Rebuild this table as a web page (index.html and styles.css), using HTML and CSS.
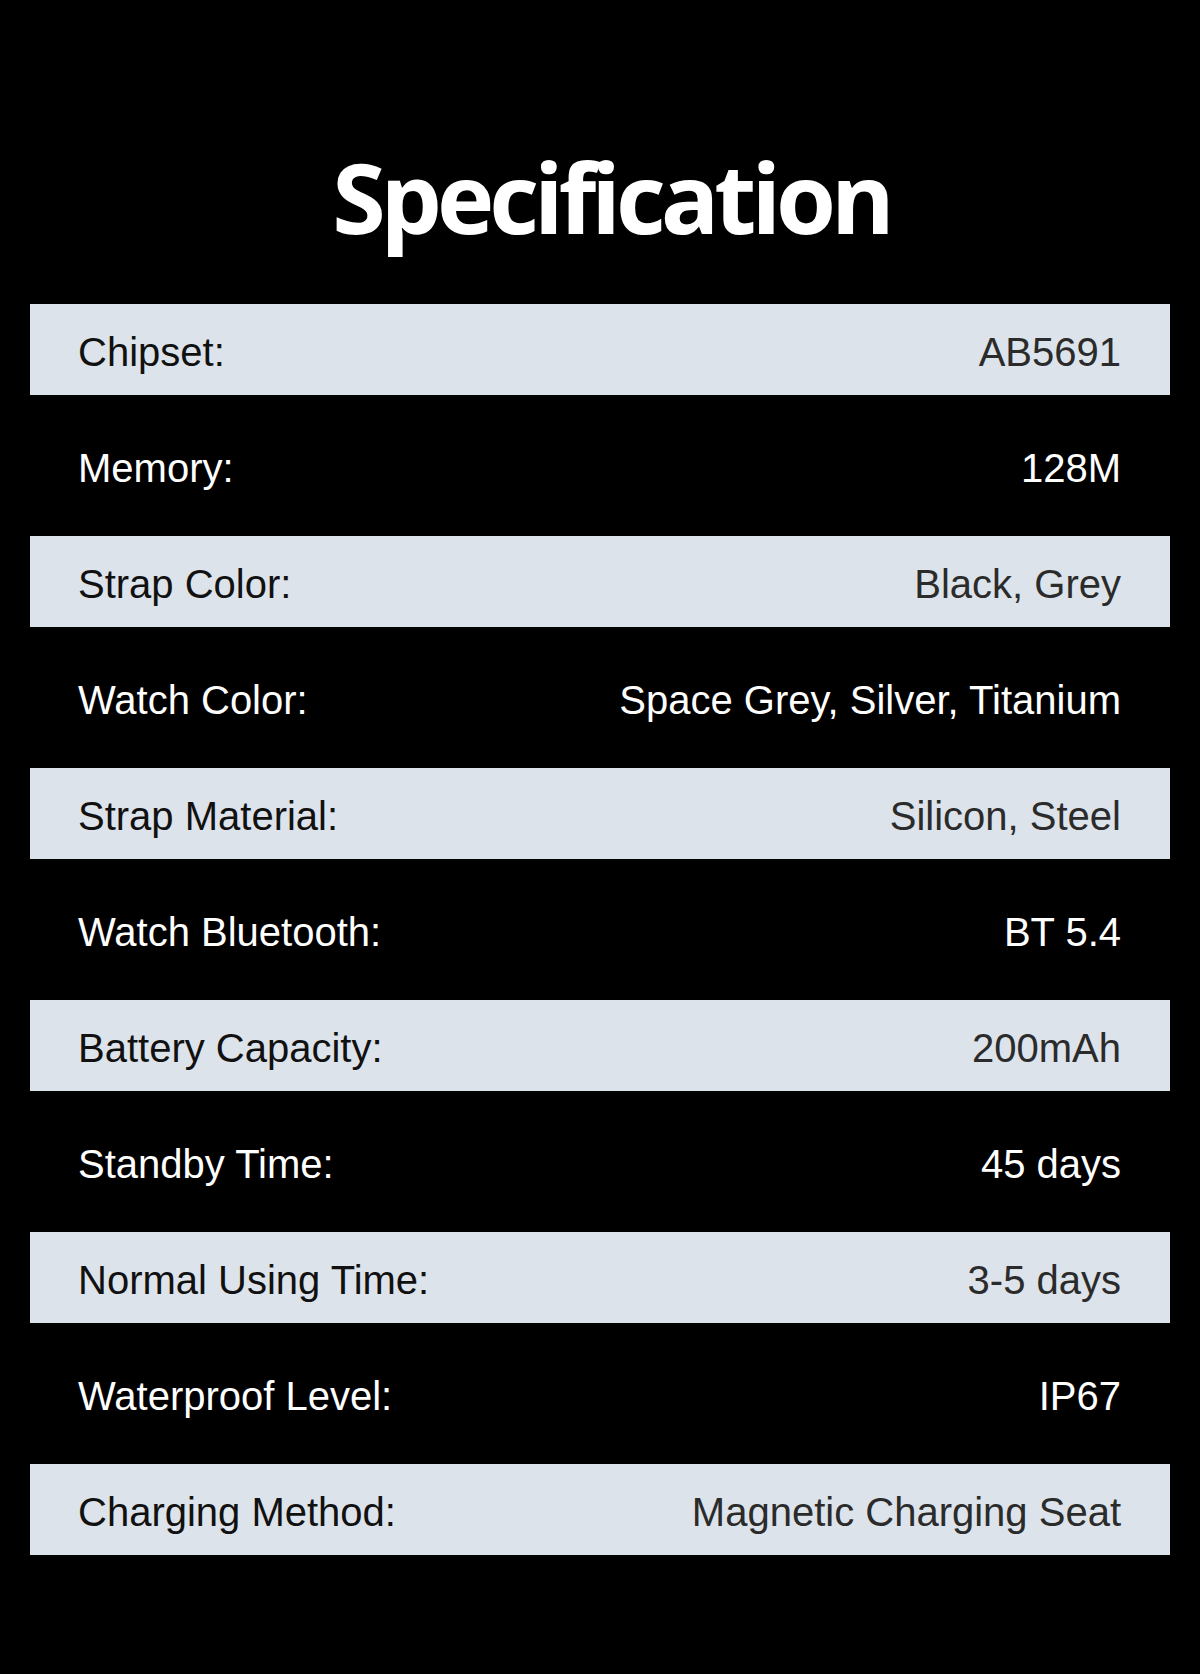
FILE: index.html
```html
<!DOCTYPE html>
<html lang="en">
<head>
<meta charset="utf-8">
<title>Specification</title>
<link rel="stylesheet" href="styles.css">
</head>
<body>
<main class="page">
  <h1 class="title">Specification</h1>
  <div class="specs">
    <div class="row light"><span class="label">Chipset:</span><span class="value">AB5691</span></div>
    <div class="row dark"><span class="label">Memory:</span><span class="value">128M</span></div>
    <div class="row light"><span class="label">Strap Color:</span><span class="value">Black, Grey</span></div>
    <div class="row dark"><span class="label">Watch Color:</span><span class="value">Space Grey, Silver, Titanium</span></div>
    <div class="row light"><span class="label">Strap Material:</span><span class="value">Silicon, Steel</span></div>
    <div class="row dark"><span class="label">Watch Bluetooth:</span><span class="value">BT 5.4</span></div>
    <div class="row light"><span class="label">Battery Capacity:</span><span class="value">200mAh</span></div>
    <div class="row dark"><span class="label">Standby Time:</span><span class="value">45 days</span></div>
    <div class="row light"><span class="label">Normal Using Time:</span><span class="value">3-5 days</span></div>
    <div class="row dark"><span class="label">Waterproof Level:</span><span class="value">IP67</span></div>
    <div class="row light"><span class="label">Charging Method:</span><span class="value">Magnetic Charging Seat</span></div>
  </div>
</main>
</body>
</html>
```
FILE: styles.css
```css
html, body {
  margin: 0;
  padding: 0;
  background: #000;
}
.page {
  width: 1200px;
  height: 1674px;
  background: #000;
  display: flex;
  flex-direction: column;
  align-items: stretch;
  padding: 0 30px;
  box-sizing: border-box;
}
.title {
  margin: 0;
  height: 304px;
  display: flex;
  align-items: center;
  justify-content: center;
  padding-top: 88px;
  padding-left: 22px;
  box-sizing: border-box;
  font-family: "Open Sans", "Noto Sans", sans-serif;
  font-weight: 700;
  font-size: 97px;
  letter-spacing: -5px;
  color: #fff;
  line-height: 1;
}
.specs {
  display: flex;
  flex-direction: column;
}
.row {
  display: flex;
  justify-content: space-between;
  align-items: center;
  padding: 4px 49px 0 48px;
  box-sizing: border-box;
  font-family: "Liberation Sans", Arial, sans-serif;
  font-size: 40px;
  line-height: 1;
}
.row.light {
  height: 91px;
  background: #dde3ea;
  color: #111;
}
.row.light .value {
  color: #2b2b2b;
}
.row.dark {
  height: 141px;
  background: #000;
  color: #fff;
}
```
